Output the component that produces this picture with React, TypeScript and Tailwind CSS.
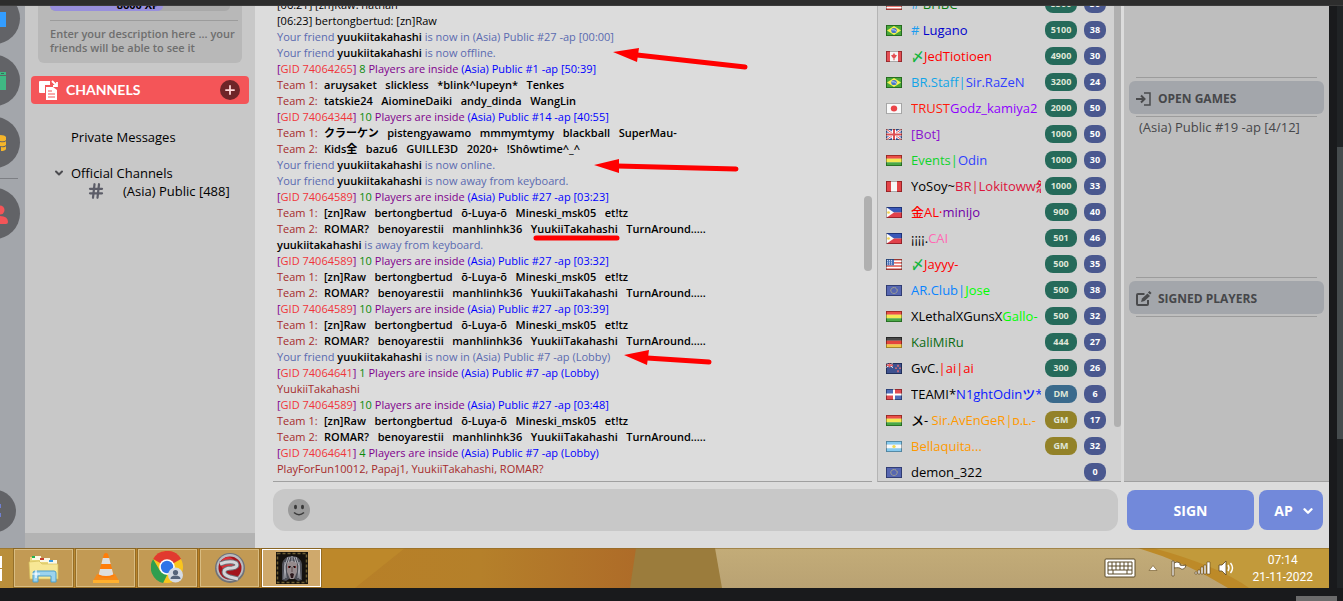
import { ChevronDown, Hash, Plus } from "lucide-react";
import type { ReactNode } from "react";

type Part = [text: string, color: string];

interface ChatUser {
  flag: string;
  name: Part[];
  rank?: string;
  level: number;
}

const BLACK = "text-black";

const teamA1 = "[zn]Raw   bertongbertud   õ-Luya-õ   Mineski_msk05   et!tz";
const teamA2 = "ROMAR?   benoyarestii   manhlinhk36   YuukiiTakahashi   TurnAround.....";

const users: ChatUser[] = [
  { flag: "us", name: [["# ", "text-[#1a9cf0]"], ["BHBC", "text-[#0b7a12]"]], rank: "5500", level: 30 },
  { flag: "br", name: [["# ", "text-[#1a9cf0]"], ["Lugano", "text-[#0000cd]"]], rank: "5100", level: 38 },
  { flag: "ca", name: [["〆", "text-[#12b53c]"], ["JedTiotioen", "text-[#ff0000]"]], rank: "4900", level: 30 },
  { flag: "br", name: [["BR.Staff|", "text-[#12a5e8]"], ["Sir.RaZeN", "text-[#2f3fff]"]], rank: "3200", level: 24 },
  { flag: "jp", name: [["TRUST", "text-[#ff1a0a]"], ["Godz_kamiya2", "text-[#8f00ff]"]], rank: "2000", level: 50 },
  { flag: "gb", name: [["[Bot]", "text-[#8a12d0]"]], rank: "1000", level: 50 },
  { flag: "bo", name: [["Events|", "text-[#0fd42c]"], ["Odin", "text-[#2f3fff]"]], rank: "1000", level: 30 },
  { flag: "pe", name: [["YoSoy~", BLACK], ["BR|Lokitoww怨", "text-[#dc143c]"]], rank: "1000", level: 33 },
  { flag: "ph", name: [["金AL·", "text-[#ff0000]"], ["minijo", "text-[#6f00a8]"]], rank: "900", level: 40 },
  { flag: "ph", name: [["¡¡¡¡.", BLACK], ["CAI", "text-[#ff69b4]"]], rank: "501", level: 46 },
  { flag: "us", name: [["〆", "text-[#12b53c]"], ["Jayyy-", "text-[#ff0000]"]], rank: "500", level: 35 },
  { flag: "eu", name: [["AR.Club|", "text-[#0a84ff]"], ["Jose", "text-[#00ff00]"]], rank: "500", level: 38 },
  { flag: "bo", name: [["XLethalXGunsX", BLACK], ["Gallo-", "text-[#00ff00]"]], rank: "500", level: 32 },
  { flag: "de", name: [["KaliMiRu", "text-[#0b6b12]"]], rank: "444", level: 27 },
  { flag: "nz", name: [["GvC.", BLACK], ["|ai|ai", "text-[#ff0000]"]], rank: "300", level: 26 },
  { flag: "do", name: [["TEAMI*", BLACK], ["N1ghtOdinツ*I", "text-[#0a1aff]"]], rank: "DM", level: 6 },
  { flag: "bo", name: [["〤- ", BLACK], ["Sir.AvEnGeR|ᴅ.ʟ.-", "text-[#ff9900]"]], rank: "GM", level: 17 },
  { flag: "ar", name: [["Bellaquita...", "text-[#ff9900]"]], rank: "GM", level: 32 },
  { flag: "eu", name: [["demon_322", BLACK]], level: 0 },
];

const stripes = (colors: string[]) =>
  colors.map((c, i) => <rect key={i} y={(i * 12) / colors.length} width="16" height={12 / colors.length + 0.1} fill={c} />);

const flagArt: Record<string, ReactNode> = {
  us: (
    <>
      {stripes(["#e2453d", "#fff", "#e2453d", "#fff", "#e2453d", "#fff", "#e2453d"])}
      <rect width="8" height="7" fill="#2f5fb0" />
      <path d="M1 1.5h6M1 3.5h6M1 5.5h6" stroke="#dfe8ff" strokeDasharray="1 1" />
    </>
  ),
  br: (
    <>
      <rect width="16" height="12" fill="#2b9a1e" />
      <path d="M8 1l7 5-7 5-7-5z" fill="#f6ee3a" />
      <circle cx="8" cy="6" r="2.8" fill="#2a62c4" />
      <path d="M5.5 5.2q3-.6 5 1.8" stroke="#fff" strokeWidth=".7" fill="none" />
    </>
  ),
  ca: (
    <>
      <rect width="16" height="12" fill="#f4f4f4" />
      <path d="M0 0h4v12H0zM12 0h4v12h-4z" fill="#e0343a" />
      <path d="M8 2l1 2 2 .5-1.500 2.500L8.500 8v2h-1V8l-1-1L5 4.500 7 4z" fill="#e0343a" />
    </>
  ),
  jp: (
    <>
      <rect width="16" height="12" fill="#f8f8f8" />
      <circle cx="8" cy="6" r="3.200" fill="#e8282c" />
    </>
  ),
  gb: (
    <>
      <rect width="16" height="12" fill="#3a5bb0" />
      <path d="M0 0l16 12M16 0L0 12" stroke="#fff" strokeWidth="2.600" />
      <path d="M0 0l16 12M16 0L0 12" stroke="#d8363c" strokeWidth="1" />
      <path d="M8 0v12M0 6h16" stroke="#fff" strokeWidth="4" />
      <path d="M8 0v12M0 6h16" stroke="#d8363c" strokeWidth="2" />
    </>
  ),
  bo: <>{stripes(["#e8342c", "#f3e63a", "#2f9c2a"])}</>,
  de: <>{stripes(["#2c2c2c", "#e02a20", "#f0c030"])}</>,
  pe: (
    <>
      <rect width="16" height="12" fill="#f6f6f6" />
      <path d="M0 0h5v12H0zM11 0h5v12h-5z" fill="#e0282c" />
    </>
  ),
  ph: (
    <>
      <rect width="16" height="6" fill="#1c3fae" />
      <rect y="6" width="16" height="6" fill="#dd2430" />
      <path d="M0 0l8 6-8 6z" fill="#fafafa" />
      <circle cx="2.500" cy="6" r="1.400" fill="#f3cf3a" />
    </>
  ),
  eu: (
    <>
      <rect width="16" height="12" fill="#3c4fa6" />
      <circle cx="8" cy="6" r="3.200" fill="none" stroke="#f1dc4c" strokeDasharray="1 1.200" />
    </>
  ),
  nz: (
    <>
      <rect width="16" height="12" fill="#22387e" />
      <path d="M0 0l7 5M7 0L0 5" stroke="#fff" />
      <path d="M3.500 0v5M0 2.500h7" stroke="#e0464c" strokeWidth="1.500" />
      <path d="M12 2v2M10 5v1.500M14 5v1.500M12 8v2" stroke="#e85a60" strokeWidth="1.500" />
    </>
  ),
  do: (
    <>
      <rect width="16" height="12" fill="#fff" />
      <path d="M0 0h7v5H0zM9 7h7v5H9z" fill="#3557b0" />
      <path d="M9 0h7v5H9zM0 7h7v5H0z" fill="#dd3038" />
    </>
  ),
  ar: (
    <>
      {stripes(["#74c3ee", "#fafafa", "#74c3ee"])}
      <circle cx="8" cy="6" r="1.700" fill="#f1d534" />
    </>
  ),
};

function Flag({ code }: { code: string }) {
  return (
    <svg viewBox="0 0 16 12" preserveAspectRatio="none" className="h-[11px] w-4 shrink-0" aria-hidden="true">
      {flagArt[code]}
      <rect x=".5" y=".5" width="15" height="11" fill="#ffffff22" stroke="#00000055" />
    </svg>
  );
}

function FriendLine({ children, prefix = "Your friend " }: { children: ReactNode; prefix?: string }) {
  return (
    <p className="text-[#5a6ab0]">
      {prefix}
      <span className="font-semibold text-black">yuukiitakahashi</span> {children}
    </p>
  );
}

function GameLine({ gid, count, room }: { gid: string; count: number; room: string }) {
  return (
    <p className="text-[#80008c]">
      [<span className="text-[#f0353a]">GID {gid}</span>] <span className="text-[#0a8a0a]">{count}</span> Players are inside{" "}
      <span className="text-[#0000ff]">{room}</span>
    </p>
  );
}

function TeamLine({ team, names }: { team: number; names: string }) {
  return (
    <p className="flex">
      <span className="w-[47px] shrink-0 text-[#a52a2a]">Team {team}:</span>
      <span className="font-semibold text-black">{names}</span>
    </p>
  );
}

function Annotations() {
  return (
    <svg width="500" height="400" className="pointer-events-none absolute top-0 left-0" aria-hidden="true">
      <g stroke="#ff0000" strokeWidth="5" strokeLinecap="round">
        <path d="M382 49l108 12M362 160l119 3M392 352l62 4M281 232h81" />
      </g>
      <path d="M358 46l26-4-2 14zM339 159l25-6v14zM369 349l25-5-2 15z" fill="#ff0000" />
    </svg>
  );
}

function ChatLog() {
  return (
    <div className="relative flex min-w-0 flex-1 flex-col pl-[18px]">
      <div className="flex min-h-0 flex-1 justify-between border-b border-[#a0a0a0]">
        <div className="flex min-w-0 flex-1 flex-col justify-end overflow-hidden pb-1 pl-1 text-[11px] leading-4 whitespace-pre">
          <p className="text-black">[06:21] [zn]Raw: nathan</p>
          <p className="text-black">[06:23] bertongbertud: [zn]Raw</p>
          <FriendLine>is now in (Asia) Public #27 -ap [00:00]</FriendLine>
          <FriendLine>is now offline.</FriendLine>
          <GameLine gid="74064265" count={8} room="(Asia) Public #1 -ap [50:39]" />
          <TeamLine team={1} names="aruysaket   slickless   *blink^lupeyn*   Tenkes" />
          <TeamLine team={2} names="tatskie24   AiomineDaiki   andy_dinda   WangLin" />
          <GameLine gid="74064344" count={10} room="(Asia) Public #14 -ap [40:55]" />
          <TeamLine team={1} names="クラーケン   pistengyawamo   mmmymtymy   blackball   SuperMau-" />
          <TeamLine team={2} names="Kids全   bazu6   GUILLE3D   2020+   !Shôwtime^_^" />
          <FriendLine>is now online.</FriendLine>
          <FriendLine>is now away from keyboard.</FriendLine>
          <GameLine gid="74064589" count={10} room="(Asia) Public #27 -ap [03:23]" />
          <TeamLine team={1} names={teamA1} />
          <TeamLine team={2} names={teamA2} />
          <FriendLine prefix="">is away from keyboard.</FriendLine>
          <GameLine gid="74064589" count={10} room="(Asia) Public #27 -ap [03:32]" />
          <TeamLine team={1} names={teamA1} />
          <TeamLine team={2} names={teamA2} />
          <GameLine gid="74064589" count={10} room="(Asia) Public #27 -ap [03:39]" />
          <TeamLine team={1} names={teamA1} />
          <TeamLine team={2} names={teamA2} />
          <FriendLine>is now in (Asia) Public #7 -ap (Lobby)</FriendLine>
          <GameLine gid="74064641" count={1} room="(Asia) Public #7 -ap (Lobby)" />
          <p className="text-[#a52a2a]">YuukiiTakahashi</p>
          <GameLine gid="74064589" count={10} room="(Asia) Public #27 -ap [03:48]" />
          <TeamLine team={1} names={teamA1} />
          <TeamLine team={2} names={teamA2} />
          <GameLine gid="74064641" count={4} room="(Asia) Public #7 -ap (Lobby)" />
          <p className="text-[#a52a2a]">PlayForFun10012, Papaj1, YuukiiTakahashi, ROMAR?</p>
        </div>
        <div className="w-2 shrink-0 pt-[190px]">
          <div className="h-[75px] rounded-full bg-[#b0b0b0]" />
        </div>
      </div>
      <Annotations />
    </div>
  );
}

function rankColor(rank: string) {
  if (rank === "DM") return "bg-[#3a6a8c]";
  if (rank === "GM") return "bg-[#938228]";
  return "bg-[#256a5a]";
}

function UserList() {
  return (
    <div className="ml-[5px] flex w-[244px] shrink-0 justify-between border-b border-l border-b-[#a0a0a0] border-l-[#b4b4b4] bg-[#d2d2d2]">
      <ul className="flex min-w-0 flex-1 flex-col justify-end overflow-hidden pl-2">
        {users.map((user, i) => (
          <li key={i} className="flex h-[26px] shrink-0 items-center gap-[9px] pt-2">
            <Flag code={user.flag} />
            <span className="w-[130px] shrink-0 overflow-hidden text-[13px] leading-[18px] font-medium whitespace-pre">
              {user.name.map(([text, color], n) => (
                <span key={n} className={color}>{text}</span>
              ))}
            </span>
            <span className="-ml-[5px] flex gap-[7px] pb-px text-center text-[9px] leading-[18px] font-bold text-white">
              <span className={`w-8 rounded-lg ${user.rank ? rankColor(user.rank) : ""}`}>
                <span className="text-[#dfe6d8]">{user.rank}</span>
              </span>
              <span className="w-[22px] rounded-lg bg-[#4a588f]">{user.level}</span>
            </span>
          </li>
        ))}
      </ul>
      <div className="h-[421px] w-[7px] shrink-0 rounded-b-full bg-[#b0b0b0]" />
    </div>
  );
}

function EnterIcon() {
  return (
    <svg width="16" height="16" viewBox="0 0 16 16" fill="none" stroke="#4a4b4d" strokeWidth="1.500" aria-hidden="true">
      <path d="M8 2h6v12H8" />
      <path d="M0 8h8M5 4.500l3.500 3.500L5 11.500" strokeWidth="2" />
    </svg>
  );
}

function SignedIcon() {
  return (
    <svg width="16" height="16" viewBox="0 0 16 16" fill="none" stroke="#4a4b4d" strokeWidth="2" aria-hidden="true">
      <path d="M8.500 3H2a1 1 0 0 0-1 1v9a1 1 0 0 0 1 1h9a1 1 0 0 0 1-1V9" />
      <path d="M5 11l1-3.500 5.500-5 2.500 2.500L8.500 10z" fill="#4a4b4d" strokeWidth="0" />
      <path d="M13 2.500l1.500-1.500" strokeWidth="3" />
    </svg>
  );
}

function PanelSection({ icon, title, children }: { icon: ReactNode; title: string; children?: ReactNode }) {
  return (
    <section className="h-[200px] shrink-0">
      <hr className="mx-[7px] border-[#9c9c9c]" />
      <h2 className="mt-[3px] flex h-[33px] items-center gap-[6px] rounded-md bg-[#a3a6ab] pt-[2px] pl-[7px] text-xs font-bold text-[#46474a]">
        {icon}
        {title}
      </h2>
      <hr className="mx-[7px] mt-[2px] border-[#9c9c9c]" />
      {children}
    </section>
  );
}

function RailButton({ label, children }: { label: string; children: ReactNode }) {
  return (
    <button aria-label={label} className="-ml-[31px] flex size-[51px] shrink-0 items-center justify-end rounded-full bg-[#626367]">
      {children}
    </button>
  );
}

function Rail() {
  return (
    <nav className="flex w-[25px] shrink-0 flex-col gap-[11px] overflow-hidden bg-[#a3a6ab]">
      <div className="-mt-[13px]">
        <RailButton label="Home">
          <svg width="20" height="20" className="shrink-0"><path d="M0 3h6v15H0z" fill="#339dff" /></svg>
        </RailButton>
      </div>
      <RailButton label="Games">
        <svg width="20" height="20" className="shrink-0"><path d="M0 1h6v3H0zM0 5h6v14H0z" fill="#3fb883" /><path d="M1 2.500h3" stroke="#2a7a58" /></svg>
      </RailButton>
      <RailButton label="Coins">
        <svg width="20" height="20" className="shrink-0"><path d="M0 2q5 0 6 2v3q-1 2-6 1zM0 9q5 1 6-1v4q-2 2-6 1zM1 14q4 1 5-1v3q-1 2-5 2z" fill="#f5b52a" /></svg>
      </RailButton>
      <hr className="mr-[7px] -mt-px w-[18px] border-[#7d7f84]" />
      <div className="-mt-[2px]">
        <RailButton label="Friends">
          <svg width="20" height="20" className="shrink-0" fill="#f45558"><circle cx="0" cy="6" r="4.500" /><path d="M-8 20q0-8 8-8t8 6q0 2-2 2z" /></svg>
        </RailButton>
      </div>
      <button aria-label="Discord" className="mt-auto mb-4 -ml-[26px] flex size-[42px] shrink-0 items-center justify-end rounded-full bg-[#626367]">
        <svg width="16" height="20" className="shrink-0"><path d="M0 3h1v4H0zM0 12h1v4H0z" fill="#7180d0" /></svg>
      </button>
    </nav>
  );
}

function ChannelsIcon() {
  return (
    <svg width="20" height="20" viewBox="0 0 20 20" aria-hidden="true">
      <path d="M1 1h10v4H6v8H1a1 1 0 0 1-1-1V2a1 1 0 0 1 1-1z" fill="#fff" />
      <path d="M13 1l4 4M18 2v4h-4" stroke="#fff" strokeWidth="1.800" fill="none" />
      <path d="M7 7h7l4 3v10H7z" fill="#fff" />
      <path d="M9 11h4M9 14h7M9 17h7" stroke="#f45558" strokeWidth="1.200" />
    </svg>
  );
}

function Sidebar() {
  return (
    <aside className="flex w-[230px] shrink-0 flex-col overflow-hidden border-b-[15px] border-[#b3b3b3] bg-[#c8c8c8]">
      <div className="mx-[13px] rounded-b-md bg-[#b8b8b8] px-3 pb-2">
        <div className="h-[5px] overflow-hidden rounded-b-md bg-[#a9a9a9]">
          <div className="flex h-full w-[113px] items-end justify-end rounded-b-md bg-[#988fdd] pr-1 text-[11px] leading-3 font-bold text-black">
            8600 XP
          </div>
        </div>
        <p className="mt-[9px] -mr-2 border-t border-[#9c9c9c] pt-[6px] text-[11px] leading-[14px] font-semibold text-[#6e6e6e]">
          Enter your description here ... your friends will be able to see it
        </p>
      </div>
      <h2 className="mx-[6px] mt-[13px] flex h-7 items-center rounded bg-[#f45558] pr-[9px] pl-2 text-sm text-white">
        <ChannelsIcon />
        <span className="ml-[7px] flex-1 font-['Lato',sans-serif] font-bold">CHANNELS</span>
        <button aria-label="Add channel" className="flex size-5 items-center justify-center rounded-full bg-[#6e2528] text-[#ffd9d9]">
          <Plus size={14} strokeWidth={3} />
        </button>
      </h2>
      <div className="mt-6 text-[13px] leading-[18px] text-black">
        <a href="#private" className="block pl-[46px]">Private Messages</a>
        <div className="mt-[18px] flex items-center pl-7">
          <ChevronDown size={12} strokeWidth={4} color="#4c4c50" />
          <span className="ml-[6px]">Official Channels</span>
        </div>
        <a href="#asia" className="flex items-center pl-[62px]">
          <Hash size={18} color="#5c5d68" strokeWidth={3} />
          <span className="ml-[18px] whitespace-nowrap">(Asia) Public [488]</span>
        </a>
      </div>
    </aside>
  );
}

function FolderIcon() {
  return (
    <svg width="32" height="32" viewBox="0 0 32 32" aria-hidden="true">
      <path d="M2 5h11l2 3h14v10H2z" fill="#e9d77c" />
      <path d="M4 4h9v4H4zM12 6h10v4H12zM20 8h9v4h-9z" fill="#fbf8e4" />
      <path d="M4 4h3v2H4z" fill="#22b14c" /><path d="M12 6h4v2h-4z" fill="#c8402c" /><path d="M21 8h4v2h-4z" fill="#3a9be0" />
      <path d="M1 10l10-1 3 3h16v15H2z" fill="#f7e795" stroke="#d6bf5a" strokeWidth=".7" />
      <path d="M5 30v-9q0-2 2-2h19q2 0 2 2v9h-5v-6H10v6z" fill="#9bd3ee" stroke="#4c9fca" />
      <path d="M8 18v8M4 22h8" stroke="#fff" strokeWidth="1.200" />
    </svg>
  );
}

function VlcIcon() {
  return (
    <svg width="32" height="32" viewBox="0 0 32 32" aria-hidden="true">
      <path d="M7 22h18l4 7H3z" fill="#f58a1a" /><path d="M3 28h26v3H3z" fill="#ffb02e" />
      <path d="M14 2q2-2 4 0l6 22q-8 4-16 0z" fill="#ff7d0a" />
      <path d="M12.800 6h6.400l1.500 6h-9.400zM10 17h12l1.300 5.500q-7 3-14.600 0z" fill="#dedede" />
    </svg>
  );
}

function ChromeIcon() {
  return (
    <svg width="34" height="34" viewBox="0 0 34 34" aria-hidden="true">
      <circle cx="16" cy="16" r="16" fill="#f9c51d" />
      <path d="M16 16L2.100 8A16 16 0 0 1 29.900 8z" fill="#e13a2f" /><path d="M16 8h14a16 16 0 0 0-14-8z" fill="#e13a2f" />
      <path d="M2.100 8l7 12 7 4-4 8A16 16 0 0 1 2.100 8z" fill="#2f9e4f" />
      <circle cx="16" cy="16" r="7.800" fill="#fff" /><circle cx="16" cy="16" r="6.200" fill="#2f74e8" />
      <circle cx="24.500" cy="24" r="7.500" fill="#d5dbe3" />
      <circle cx="24.500" cy="21.500" r="2.600" fill="#56657a" /><path d="M19.500 28q0-3.500 5-3.500t5 3.500z" fill="#56657a" />
    </svg>
  );
}

function GarenaIcon() {
  return (
    <svg width="32" height="32" viewBox="0 0 32 32" aria-hidden="true">
      <circle cx="16" cy="16" r="15" fill="#6f7278" /><circle cx="16" cy="15.500" r="13.500" fill="#b9bbc0" />
      <circle cx="16" cy="16" r="11.500" fill="#a3141c" /><circle cx="14" cy="12" r="7" fill="#dc3038" />
      <path d="M6 12q10-4 16-1 3 4-4 5-8 0-8 4 0 3 6 5l8 2" stroke="#6e7076" strokeWidth="5" fill="none" />
      <path d="M6 12q10-4 16-1 3 4-4 5-8 0-8 4 0 3 6 5l8 2" stroke="#d4d5d9" strokeWidth="3" fill="none" />
    </svg>
  );
}

function WarcraftIcon() {
  return (
    <svg width="32" height="32" viewBox="0 0 32 32" aria-hidden="true">
      <rect width="32" height="32" fill="#14110d" />
      <rect x="1.500" y="1.500" width="29" height="29" fill="none" stroke="#6d5f35" strokeWidth="1.500" strokeDasharray="3 2" />
      <path d="M6 28V12q2-8 10-8t10 8v16l-4 1-6-4-6 4z" fill="#4c4d55" />
      <path d="M11 11q5-4 10 0v9l-3 7h-4l-3-7z" fill="#958a8c" />
      <path d="M9 10l-1 17M12 5l-3 9 1 12M20 5l3 9-1 12M23 10l1 17M16 4v6M14 5l-2 6M18 5l2 6" stroke="#b4b5bd" strokeWidth=".9" fill="none" />
      <path d="M12 14h3l-1 2h-2zM17 14h3v2h-2z" fill="#1a0e10" />
      <path d="M14 22l2-1 2 1-1 4h-2z" fill="#2c181c" /><path d="M16 15v5" stroke="#5e4b4c" />
      <path d="M12 15h1M19 15h1" stroke="#e04444" />
    </svg>
  );
}

function Wallpaper() {
  return (
    <svg viewBox="0 0 1329 40" preserveAspectRatio="none" className="absolute inset-0 size-full" aria-hidden="true">
      <defs>
        <linearGradient id="amber">
          <stop offset="0" stopColor="#b98f3c" /><stop offset=".3" stopColor="#ba7f24" />
          <stop offset=".75" stopColor="#b5802a" /><stop offset="1" stopColor="#ae6b28" />
        </linearGradient>
        <linearGradient id="sand" x1="0" y1="0" x2="0" y2="1">
          <stop offset="0" stopColor="#c3ac78" /><stop offset="1" stopColor="#b9a273" />
        </linearGradient>
      </defs>
      <rect width="640" height="40" fill="url(#amber)" />
      <path d="M320 0h85l-50 40h-35z" fill="#bd882a" />
      <path d="M636 0h90v40h-96z" fill="#9b7c3c" />
      <path d="M715 0h614v40H722z" fill="url(#sand)" />
      <path d="M1138 0h191v40h-101q-40-25-90-40z" fill="#bd8a28" />
      <path d="M1153 0h176v40h-80q-30-22-96-40z" fill="#c29a3b" />
      <path d="M0 .5h1329" stroke="#8c6a2c" strokeOpacity=".6" />
    </svg>
  );
}

const tasks = [
  { label: "File Explorer", icon: <FolderIcon /> },
  { label: "VLC media player", icon: <VlcIcon /> },
  { label: "Google Chrome", icon: <ChromeIcon /> },
  { label: "Garena", icon: <GarenaIcon /> },
  { label: "Warcraft III", icon: <WarcraftIcon />, active: true },
];

function Taskbar() {
  return (
    <footer className="relative h-10 shrink-0 overflow-hidden">
      <Wallpaper />
      <div className="relative flex h-full items-center">
        <div className="mr-3 flex w-[2px] flex-col gap-px">
          <span className="h-3 bg-white" />
          <span className="h-3 bg-white" />
        </div>
        <div className="flex gap-[3px]">
          {tasks.map((task) => (
            <button
              key={task.label}
              aria-label={task.label}
              className={`flex h-[38px] w-[59px] items-center justify-center border outline outline-[#7d5c20]/60 ${
                task.active ? "border-white bg-[#cfa96c]" : "border-[#d8bc82] bg-[#c29a54]"
              }`}
            >
              {task.icon}
            </button>
          ))}
        </div>
        <div className="ml-auto flex items-center pr-4">
          <svg width="32" height="20" viewBox="0 0 32 20" aria-hidden="true">
            <rect x="1" y="1" width="30" height="18" rx="1" fill="#fff" stroke="#5a4a28" />
            <path d="M4 4h24v12H4zM4 8h24M4 12h24M8 4v8M12 4v8M16 4v8M20 4v8M24 4v8M9 12v4M23 12v4" stroke="#5a4a28" fill="none" />
          </svg>
          <svg width="10" height="8" className="ml-3" aria-hidden="true"><path d="M1 6.500l4-5 4 5z" fill="#fff" stroke="#7a6030" strokeWidth=".7" /></svg>
          <svg width="18" height="18" className="ml-3" aria-hidden="true">
            <path d="M4 4q3-2 6 0v2q2 1 6 0-1 5-5 4-1-2-7-1z" fill="#fff" stroke="#5a4420" strokeWidth=".8" />
            <path d="M2 2h2v15H2z" fill="#fff" stroke="#5a4420" strokeWidth=".7" />
          </svg>
          <svg width="17" height="14" className="ml-[6px]" fill="#fff" stroke="#5a4420" strokeWidth=".6" aria-hidden="true">
            <path d="M1 11h2v2H1zM4 9h2v4H4zM7 6h2v7H7zM10 4h2v9h-2zM13 1h3v12h-3z" />
          </svg>
          <svg width="18" height="16" className="ml-[7px]" fill="none" aria-hidden="true">
            <path d="M1 5h3l4-4v14l-4-4H1z" fill="#fff" stroke="#5a4420" strokeWidth=".8" />
            <path d="M10 5q2 3 0 6M12.500 3q4 5 0 10" stroke="#fff" strokeWidth="1.400" />
          </svg>
          <time className="ml-4 pt-[2px] text-center font-['Roboto',sans-serif] text-xs leading-[17px] text-white">
            07:14
            <br />
            21-11-2022
          </time>
        </div>
      </div>
    </footer>
  );
}

export default function App() {
  return (
    <div className="flex h-screen flex-col bg-[#191a1c] font-['Open_Sans','Noto_Sans_CJK_JP',sans-serif]">
      <div className="h-[6px] shrink-0 border-b border-[#3c3c3c] bg-[#2d2d2d]" />
      <div className="flex min-h-0 flex-1">
        <div className="flex min-w-0 flex-1 flex-col">
          <main className="flex min-h-0 flex-1 bg-[#dcdcdc]">
            <Rail />
            <Sidebar />
            <div className="flex min-w-0 flex-1 flex-col">
              <div className="flex min-h-0 flex-1">
                <ChatLog />
                <UserList />
                <aside className="ml-[3px] w-[205px] shrink-0 overflow-hidden border-b border-[#a0a0a0] bg-[#bebebe] px-[5px] pt-[71px]">
                  <PanelSection icon={<EnterIcon />} title="OPEN GAMES">
                    <p className="pl-[10px] text-[13px] leading-5 whitespace-nowrap text-[#46474a]">(Asia) Public #19 -ap [4/12]</p>
                  </PanelSection>
                  <PanelSection icon={<SignedIcon />} title="SIGNED PLAYERS" />
                </aside>
              </div>
              <form className="flex h-[66px] shrink-0 items-start pt-[7px] pr-[6px] pl-[18px]" onSubmit={(e) => e.preventDefault()}>
                <div className="flex h-[42px] flex-1 items-center rounded-xl bg-[#c8c8c8] pr-4 pl-[15px]">
                  <svg width="22" height="22" viewBox="0 0 22 22" aria-hidden="true">
                    <circle cx="11" cy="11" r="11" fill="#9a9a9a" />
                    <ellipse cx="7.500" cy="8" rx="1.500" ry="2.200" fill="#3a3a3a" /><ellipse cx="14.500" cy="8" rx="1.500" ry="2.200" fill="#3a3a3a" />
                    <path d="M6 13.500q5 4.500 10 0" stroke="#3a3a3a" strokeWidth="1.600" fill="none" />
                  </svg>
                  <input aria-label="Message" className="ml-3 min-w-0 flex-1 bg-transparent text-[13px] outline-none" />
                </div>
                <button type="submit" className="mt-px ml-[9px] h-10 w-[127px] rounded-lg bg-[#7289da] pt-[2px] text-sm font-bold text-white">
                  SIGN
                </button>
                <button type="button" className="mt-px ml-[5px] flex h-10 w-16 items-center justify-center gap-2 rounded-lg bg-[#7289da] pt-[2px] pl-[7px] text-sm font-bold text-white">
                  AP
                  <ChevronDown size={14} strokeWidth={4} />
                </button>
              </form>
            </div>
          </main>
          <Taskbar />
        </div>
        <div className="ml-2 w-[6px] shrink-0 bg-[#202325] pt-[141px]">
          <div className="h-[292px] bg-[#454b4d]" />
        </div>
      </div>
      <div className="flex h-[13px] shrink-0 items-end justify-end">
        <div className="mr-[6px] h-[5px] w-[41px] bg-[#6b6b6b]" />
      </div>
    </div>
  );
}
